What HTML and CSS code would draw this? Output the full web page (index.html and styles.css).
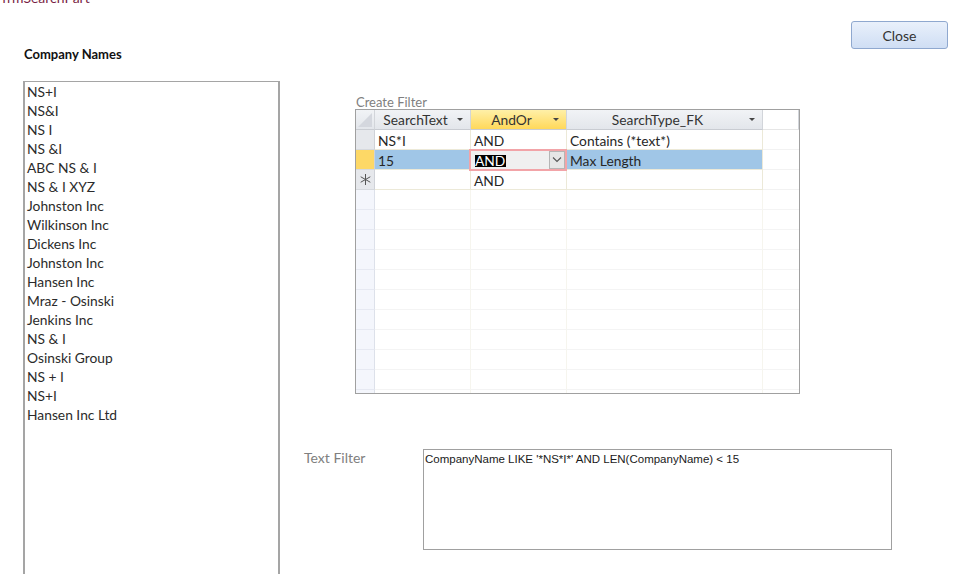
FILE: index.html
```html
<!DOCTYPE html>
<html>
<head>
<meta charset="utf-8">
<link rel="stylesheet" href="styles.css">
</head>
<body>
<div class="caption"><span>frmSearchPart</span></div>
<div class="form">
  <div class="left">
    <div class="lbl-bold">Company Names</div>
    <div class="listbox">
      <div class="item">NS+I</div>
      <div class="item">NS&amp;I</div>
      <div class="item">NS I</div>
      <div class="item">NS &amp;I</div>
      <div class="item">ABC NS &amp; I</div>
      <div class="item">NS &amp; I XYZ</div>
      <div class="item">Johnston Inc</div>
      <div class="item">Wilkinson Inc</div>
      <div class="item">Dickens Inc</div>
      <div class="item">Johnston Inc</div>
      <div class="item">Hansen Inc</div>
      <div class="item">Mraz - Osinski</div>
      <div class="item">Jenkins Inc</div>
      <div class="item">NS &amp; I</div>
      <div class="item">Osinski Group</div>
      <div class="item">NS + I</div>
      <div class="item">NS+I</div>
      <div class="item">Hansen Inc Ltd</div>
    </div>
  </div>
  <div class="right">
    <div class="btn-row"><button class="btn">Close</button></div>
    <div class="filter-block">
      <div class="lbl-gray">Create Filter</div>
      <div class="sheet">
        <div class="row head">
          <div class="c sel corner"><svg width="18" height="19" viewBox="0 0 18 19"><polygon points="16,3 16,17 2,17" fill="#d4d7de"/></svg></div>
          <div class="c w1 hc">SearchText<span class="arr"></span></div>
          <div class="c w1 hc hy">AndOr<span class="arr"></span></div>
          <div class="c w2 hc">SearchType_FK<span class="arr"></span></div>
          <div class="c rest hrest"></div>
        </div>
        <div class="row data">
          <div class="c sel"></div>
          <div class="c w1">NS*I</div>
          <div class="c w1">AND</div>
          <div class="c w2">Contains (*text*)</div>
          <div class="c rest"></div>
        </div>
        <div class="row data cur">
          <div class="c sel ysel"></div>
          <div class="c w1 blue">15</div>
          <div class="c w1 editcell">
            <div class="editor"><span class="hl">AND</span><span class="ddbtn"><svg width="10" height="6" viewBox="0 0 10 6"><polyline points="1,0.5 5,4.5 9,0.5" fill="none" stroke="#555" stroke-width="1.1"/></svg></span></div>
          </div>
          <div class="c w2 blue">Max Length</div>
          <div class="c rest"></div>
        </div>
        <div class="row data">
          <div class="c sel"><svg width="11" height="11" viewBox="0 0 11 11"><g stroke="#555" stroke-width="1"><line x1="5.5" y1="0" x2="5.5" y2="11"/><line x1="0.7" y1="2.75" x2="10.3" y2="8.25"/><line x1="0.7" y1="8.25" x2="10.3" y2="2.75"/></g></svg></div>
          <div class="c w1"></div>
          <div class="c w1">AND</div>
          <div class="c w2"></div>
          <div class="c rest"></div>
        </div>
        <div class="row empty"><div class="c sel"></div><div class="c w1"></div><div class="c w1"></div><div class="c w2"></div><div class="c rest"></div></div>
        <div class="row empty"><div class="c sel"></div><div class="c w1"></div><div class="c w1"></div><div class="c w2"></div><div class="c rest"></div></div>
        <div class="row empty"><div class="c sel"></div><div class="c w1"></div><div class="c w1"></div><div class="c w2"></div><div class="c rest"></div></div>
        <div class="row empty"><div class="c sel"></div><div class="c w1"></div><div class="c w1"></div><div class="c w2"></div><div class="c rest"></div></div>
        <div class="row empty"><div class="c sel"></div><div class="c w1"></div><div class="c w1"></div><div class="c w2"></div><div class="c rest"></div></div>
        <div class="row empty"><div class="c sel"></div><div class="c w1"></div><div class="c w1"></div><div class="c w2"></div><div class="c rest"></div></div>
        <div class="row empty"><div class="c sel"></div><div class="c w1"></div><div class="c w1"></div><div class="c w2"></div><div class="c rest"></div></div>
        <div class="row empty"><div class="c sel"></div><div class="c w1"></div><div class="c w1"></div><div class="c w2"></div><div class="c rest"></div></div>
        <div class="row empty"><div class="c sel"></div><div class="c w1"></div><div class="c w1"></div><div class="c w2"></div><div class="c rest"></div></div>
        <div class="row empty"><div class="c sel"></div><div class="c w1"></div><div class="c w1"></div><div class="c w2"></div><div class="c rest"></div></div>
        <div class="row empty"><div class="c sel"></div><div class="c w1"></div><div class="c w1"></div><div class="c w2"></div><div class="c rest"></div></div>
      </div>
    </div>
    <div class="text-filter">
      <div class="lbl-gray tf-label">Text Filter</div>
      <div class="tf-box">CompanyName LIKE '*NS*I*' AND LEN(CompanyName) &lt; 15</div>
    </div>
  </div>
</div>
</body>
</html>
```
FILE: styles.css
```css
html, body {
  margin: 0;
  padding: 0;
  background: #fff;
}
body {
  width: 954px;
  height: 574px;
  overflow: hidden;
  font-family: Lato, "Open Sans", sans-serif;
  color: #262626;
}
.caption {
  height: 6px;
  overflow: hidden;
  padding-left: 2px;
}
.caption span {
  display: block;
  margin-top: -9px;
  font-size: 14px;
  line-height: 14px;
  color: #7a1f45;
}
.form {
  display: flex;
}
.left {
  width: 280px;
  flex: none;
  padding-left: 23px;
  box-sizing: border-box;
}
.lbl-bold {
  margin-top: 40px;
  padding-left: 1px;
  font-weight: bold;
  font-size: 13px;
  line-height: 16px;
  color: #111;
}
.listbox {
  margin-top: 19px;
  width: 257px;
  height: 520px;
  box-sizing: border-box;
  border: 1px solid #a5a5a5;
  border-right-width: 2px;
  border-left-width: 2px;
  padding: 0 0 0 2px;
}
.item {
  height: 19px;
  line-height: 19px;
  font-size: 13.8px;
  color: #2b2b2b;
}
.right {
  flex: 1;
}
.btn-row {
  display: flex;
  justify-content: flex-end;
  padding-right: 6px;
  margin-top: 15px;
}
.btn {
  width: 97px;
  height: 28px;
  border: 1px solid #8fa8cf;
  border-radius: 3px;
  background: linear-gradient(#e9f0fb, #cfdef4);
  font-family: Lato, "Open Sans", sans-serif;
  font-size: 14px;
  color: #333;
  padding: 0;
}
.filter-block {
  margin-left: 75px;
  margin-top: 47px;
}
.lbl-gray {
  font-size: 13px;
  line-height: 13px;
  color: #808080;
  padding-left: 1px;
}
.sheet {
  width: 445px;
  height: 285px;
  box-sizing: border-box;
  border: 1px solid #a0a0a0;
  overflow: hidden;
}
.row {
  display: flex;
  height: 20px;
}
.c {
  box-sizing: border-box;
  height: 20px;
  border-right: 1px solid #ece9d8;
  border-bottom: 1px solid #ece9d8;
  font-size: 13.8px;
  line-height: 19px;
  padding: 1px 0 0 3px;
  white-space: nowrap;
  overflow: hidden;
}
.sel { width: 19px; flex: none; padding: 0; display: flex; align-items: center; justify-content: center; }
.w1 { width: 96px; flex: none; }
.w2 { width: 196px; flex: none; }
.rest { width: 36px; flex: none; border-right: none; }
.head .c {
  background: linear-gradient(#f1f3f6, #e3e6eb);
  border-right: 1px solid #d2d5da;
  border-bottom: 1px solid #c9ccd2;
  color: #333;
}
.head .sel { align-items: stretch; padding: 0; }
.head .hc {
  position: relative;
  text-align: center;
  padding: 0 14px 0 0;
}
.head .hy {
  background: linear-gradient(#fff0a8, #ffd85a);
}
.head .hrest {
  background: #fff;
  border-bottom: 1px solid #e6e6e6;
}
.arr {
  position: absolute;
  right: 7px;
  top: 8px;
  width: 0;
  height: 0;
  border-left: 3px solid transparent;
  border-right: 3px solid transparent;
  border-top: 3px solid #444;
}
.data .sel {
  background: #e6e8ec;
  border-right: 1px solid #cfd2d8;
  border-bottom: 1px solid #d6d9de;
}
.data .ysel { background: #fdd866; }
.data .rest { border-bottom-color: #f2f2f2; }
.blue { background: #a0c6e7; }
.editcell {
  padding: 0;
  overflow: visible;
  position: relative;
}
.editor {
  position: absolute;
  left: -2px;
  top: -1px;
  width: 98px;
  height: 22px;
  box-sizing: border-box;
  border: 2px solid #f2a4a8;
  background: #f0f0f0;
  z-index: 2;
}
.hl {
  position: absolute;
  left: 4px;
  top: 4px;
  height: 12px;
  line-height: 12px;
  background: #000;
  color: #fff;
  font-size: 13.8px;
  padding: 0 1px 0 0;
}
.ddbtn {
  position: absolute;
  right: 0;
  top: 0;
  width: 16px;
  height: 18px;
  box-sizing: border-box;
  border: 1px solid #b5b5b5;
  background: #e6e6e6;
  display: flex;
  align-items: center;
  justify-content: center;
}
.empty .c {
  border-right: 1px solid #f6f5ee;
  border-bottom: 1px solid #f4f4f4;
}
.empty .sel {
  background: #f4f6fc;
  border-right: 1px solid #dde1ea;
  border-bottom: 1px solid #e6e9f2;
}
.empty .rest { border-right: none; }
.text-filter {
  display: flex;
  margin-left: 23px;
  margin-top: 55px;
}
.tf-label {
  width: 119px;
  flex: none;
  padding-top: 2px;
  padding-left: 1px;
  font-size: 14px;
  line-height: 14px;
}
.tf-box {
  width: 469px;
  height: 101px;
  box-sizing: border-box;
  border: 1px solid #a0a0a0;
  padding: 2px 0 0 1px;
  font-family: "Liberation Sans", Arial, sans-serif;
  font-size: 11.5px;
  line-height: 14px;
  color: #1a1a1a;
}
```
